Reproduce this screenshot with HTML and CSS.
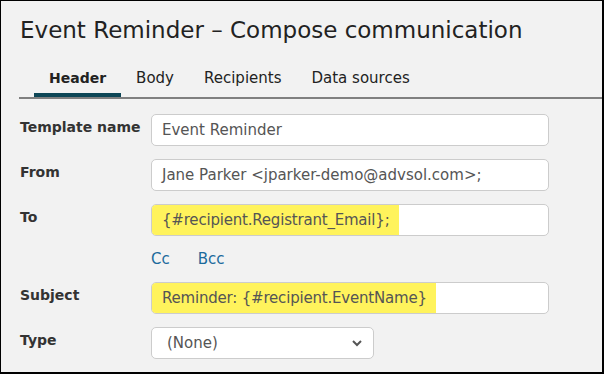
FILE: index.html
```html
<!DOCTYPE html>
<html lang="en">

<head>
    <meta charset="UTF-8">
    <meta name="viewport" content="width=device-width, initial-scale=1.0">
    <title>Event Reminder - Compose communication</title>
    <link rel="stylesheet" href="styles.css">
</head>

<body>
    <div class="panel">
        <h1>Event Reminder – Compose communication</h1>

        <ul class="tabs">
            <li class="tab active">Header</li>
            <li class="tab">Body</li>
            <li class="tab">Recipients</li>
            <li class="tab">Data sources</li>
        </ul>

        <div class="form">
            <div class="row">
                <label>Template name</label>
                <div class="field">Event Reminder</div>
            </div>
            <div class="row">
                <label>From</label>
                <div class="field">Jane Parker &lt;jparker-demo@advsol.com&gt;;</div>
            </div>
            <div class="row">
                <label>To</label>
                <div class="field"><span class="token">{#recipient.Registrant_Email};</span></div>
            </div>
            <div class="row links">
                <label></label>
                <div class="copy-links">
                    <a href="#">Cc</a>
                    <a href="#">Bcc</a>
                </div>
            </div>
            <div class="row">
                <label>Subject</label>
                <div class="field"><span class="token">Reminder: {#recipient.EventName}</span></div>
            </div>
            <div class="row">
                <label>Type</label>
                <div class="field select">
                    <span>(None)</span>
                    <svg width="12" height="8" viewBox="0 0 12 8"><path d="M2 2l4 4 4-4" fill="none" stroke="#555" stroke-width="2" /></svg>
                </div>
            </div>
        </div>
    </div>
</body>

</html>
```

FILE: styles.css
```css
body {
    margin: 0;
    font-family: "DejaVu Sans", sans-serif;
}

.panel {
    box-sizing: border-box;
    width: 604px;
    height: 374px;
    border: 1px solid #000;
    border-right-width: 2px;
    border-bottom-width: 2px;
    background: #f2f2f2;
    overflow: hidden;
}

h1 {
    margin: 0;
    padding: 14px 0 0 19px;
    font-size: 23px;
    line-height: 30px;
    font-weight: 400;
    color: #222;
}

.tabs {
    display: flex;
    list-style: none;
    margin: 23px 0 0 18px;
    padding: 0 0 0 15px;
    border-bottom: 2px solid #808080;
}

.tab {
    padding: 0 15px 5px;
    font-size: 15px;
    line-height: 20px;
    color: #222;
    border-bottom: 4px solid transparent;
}

.tab.active {
    font-size: 14px;
    font-weight: 700;
    border-bottom-color: #0d4656;
}

.form {
    padding: 15px 0 0 19px;
}

.row {
    display: flex;
    margin-bottom: 13px;
}

.row label {
    width: 131px;
    flex: none;
    padding-top: 5px;
    font-size: 14px;
    font-weight: 700;
    color: #333;
}

.field {
    box-sizing: border-box;
    display: flex;
    align-items: stretch;
    width: 398px;
    height: 32px;
    padding-left: 10px;
    border: 1px solid #ccc;
    border-radius: 5px;
    background: #fff;
    font-size: 15px;
    line-height: 30px;
    color: #555;
}

.field .token {
    margin-left: -10px;
    padding: 0 9px 0 10px;
    border-radius: 4px 0 0 4px;
    background: #fff35c;
    letter-spacing: -0.2px;
}

.links label {
    padding: 0;
}

.copy-links {
    display: flex;
    gap: 28px;
    height: 20px;
    font-size: 15px;
    line-height: 20px;
}

.copy-links a {
    color: #1b6a9c;
    text-decoration: none;
}

.field.select {
    width: 223px;
    padding: 0 10px 0 15px;
    justify-content: space-between;
    align-items: center;
}
```
